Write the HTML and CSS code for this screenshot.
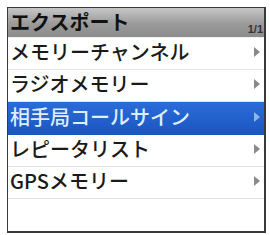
FILE: index.html
```html
<!DOCTYPE html>
<html lang="ja">
<head>
<meta charset="utf-8">
<link rel="stylesheet" href="styles.css">
</head>
<body>
<div class="screen">
  <div class="header">
    <span class="title">エクスポート</span>
    <span class="page">1/1</span>
  </div>
  <ul class="menu">
    <li class="item"><span class="label">メモリーチャンネル</span><span class="arrow"></span></li>
    <li class="item"><span class="label">ラジオメモリー</span><span class="arrow"></span></li>
    <li class="item selected"><span class="label">相手局コールサイン</span><span class="arrow"></span></li>
    <li class="item"><span class="label">レピータリスト</span><span class="arrow"></span></li>
    <li class="item"><span class="label">GPSメモリー</span><span class="arrow"></span></li>
    <li class="item empty"></li>
  </ul>
</div>
</body>
</html>
```
FILE: styles.css
```css
html, body {
  margin: 0;
  padding: 0;
  background: #ffffff;
}
body {
  padding: 7px 4px 3px 7px;
  font-family: "Noto Sans CJK JP", "Noto Sans", sans-serif;
}
.screen {
  width: 256px;
  height: 223px;
  border: 1px solid #3a3a3a;
  border-right-width: 2px;
  border-bottom-width: 2px;
  background: #ffffff;
  display: flex;
  flex-direction: column;
  overflow: hidden;
}
.header {
  height: 29px;
  flex: none;
  display: flex;
  align-items: center;
  justify-content: space-between;
  padding: 0 1px 0 2px;
  background: linear-gradient(#c6c6c6 0%, #9a9a9a 55%, #8c8c8c 100%);
  border-bottom: 1px solid #f0f0f0;
}
.title {
  font-size: 20px;
  font-weight: bold;
  color: #111;
  line-height: 1;
  margin-bottom: 2px;
}
.page {
  align-self: flex-end;
  font-family: "Liberation Sans", sans-serif;
  font-size: 11px;
  font-weight: bold;
  color: #333;
  margin-bottom: 2px;
}
.menu {
  list-style: none;
  margin: 0;
  padding: 0;
  flex: 1;
  display: flex;
  flex-direction: column;
}
.item {
  height: 32px;
  flex: none;
  display: flex;
  align-items: center;
  justify-content: space-between;
  padding: 0 4px 3px 2px;
  border-bottom: 1px solid #e4e4e4;
  box-sizing: border-box;
}
.item.selected {
  height: 33px;
}
.item.empty {
  border-bottom: none;
  flex: 1;
}
.label {
  font-size: 20px;
  font-weight: 500;
  color: #1a1a1a;
  line-height: 1;
}
.arrow {
  width: 0;
  height: 0;
  border-top: 5px solid transparent;
  border-bottom: 5px solid transparent;
  border-left: 6px solid #8a8a8a;
}
.item.selected {
  background: linear-gradient(#2c6cd8, #1a56c2);
  border-bottom-color: #1a56c2;
}
.item.selected .label {
  color: #dfeeff;
}
.item.selected .arrow {
  border-left-color: #8fb4ec;
}
```
